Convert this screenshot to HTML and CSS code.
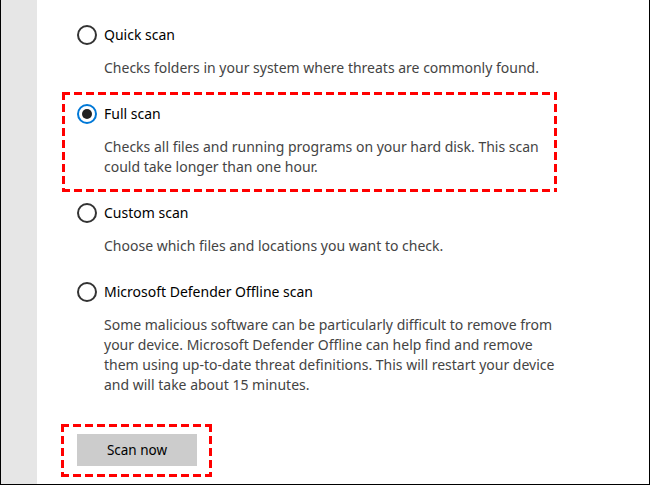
FILE: index.html
```html
<!DOCTYPE html>
<html lang="en">
<head>
<meta charset="utf-8">
<title>Scan options</title>
<link rel="stylesheet" href="styles.css">
</head>
<body>
<div class="frame">
  <aside class="sidebar"></aside>
  <main class="content">
    <div class="options">
      <div class="option">
        <div class="title-row"><span class="radio"></span><span class="title">Quick scan</span></div>
        <p class="desc">Checks folders in your system where threats are commonly found.</p>
      </div>
      <div class="option option-marked dashed">
        <div class="title-row"><span class="radio radio-on"></span><span class="title">Full scan</span></div>
        <p class="desc">Checks all files and running programs on your hard disk. This scan<br>could take longer than one hour.</p>
      </div>
      <div class="option">
        <div class="title-row"><span class="radio"></span><span class="title">Custom scan</span></div>
        <p class="desc">Choose which files and locations you want to check.</p>
      </div>
      <div class="option">
        <div class="title-row"><span class="radio"></span><span class="title">Microsoft Defender Offline scan</span></div>
        <p class="desc">Some malicious software can be particularly difficult to remove from<br>your device. Microsoft Defender Offline can help find and remove<br>them using up-to-date threat definitions. This will restart your device<br>and will take about 15 minutes.</p>
      </div>
    </div>
    <div class="button-mark dashed">
      <button class="scan-btn">Scan now</button>
    </div>
  </main>
</div>
</body>
</html>
```
FILE: styles.css
```css
* { box-sizing: border-box; }
html, body { margin: 0; padding: 0; background: #fff; }
body {
  font-family: "Noto Sans", "Open Sans", sans-serif;
  font-size: 14px;
  color: #000;
}
.frame {
  width: 650px;
  height: 485px;
  display: flex;
  border-left: 1px solid #000;
  border-right: 1px solid #000;
  border-bottom: 1px solid #000;
  overflow: hidden;
}
.sidebar {
  width: 36px;
  flex: none;
  background: #e6e6e6;
}
.content {
  flex: 1;
  padding: 25px 0 0 40px;
}
.options {
  display: flex;
  flex-direction: column;
  gap: 26px;
}
.title-row {
  display: flex;
  align-items: center;
  height: 20px;
  gap: 7px;
}
.radio {
  width: 20px;
  height: 20px;
  border-radius: 50%;
  border: 2px solid #333;
  flex: none;
  display: flex;
  align-items: center;
  justify-content: center;
}
.radio-on { border-color: #0078d7; }
.radio-on::after {
  content: "";
  width: 10px;
  height: 10px;
  border-radius: 50%;
  background: #222;
}
.title { font-size: 14px; line-height: 20px; color: #000; }
.desc {
  margin: 13px 0 0 27px;
  line-height: 20px;
  color: #444;
}
.dashed {
  background:
    repeating-linear-gradient(90deg, #ff0000 0 8px, transparent 8px 12px) left top / 100% 3px no-repeat,
    repeating-linear-gradient(90deg, #ff0000 0 8px, transparent 8px 12px) left bottom / 100% 3px no-repeat,
    repeating-linear-gradient(180deg, #ff0000 0 8px, transparent 8px 12px) left top / 3px 100% no-repeat,
    repeating-linear-gradient(180deg, #ff0000 0 8px, transparent 8px 12px) right top / 3px 100% no-repeat;
}
.option-marked {
  margin: -12px 0 -15px -15px;
  padding: 12px 0 15px 15px;
  width: 495px;
}
.button-mark {
  margin: 29px 0 0 -16px;
  width: 151px;
  padding: 10px 15px 11px 16px;
}
.scan-btn {
  display: block;
  width: 120px;
  height: 32px;
  border: none;
  background: #cccccc;
  color: #000;
  font-family: inherit;
  font-size: 13.5px;
  padding: 0;
}
```
